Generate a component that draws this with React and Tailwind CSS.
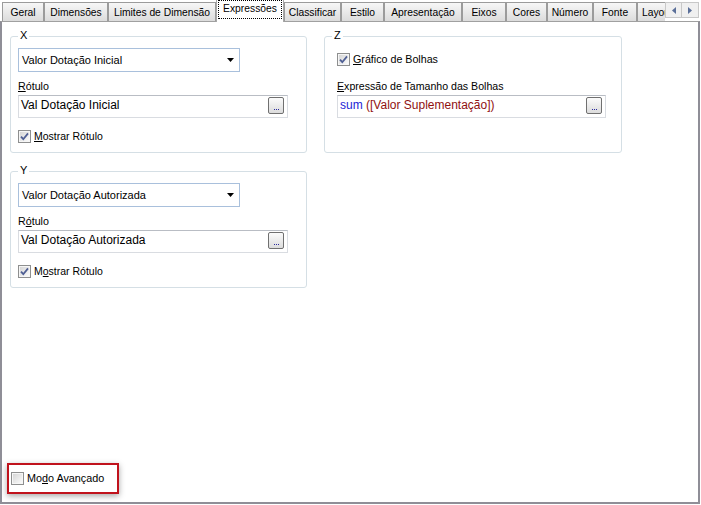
import React from "react";

function Check({ checked = false }) {
  return (
    <svg width="13" height="13" viewBox="0 0 13 13" className="shrink-0 block">
      <defs>
        <linearGradient id="cbg" x1="0" y1="0" x2="1" y2="1">
          <stop offset="0" stopColor="#d6d6d6" />
          <stop offset="1" stopColor="#fafafa" />
        </linearGradient>
      </defs>
      <rect x="0.5" y="0.5" width="12" height="12" fill="#f6f6f6" stroke="#8e8f8f" />
      <rect x="2" y="2" width="9" height="9" fill="url(#cbg)" />
      {checked && (
        <path d="M3 6.6 L5.3 9.2 L10 3.4" stroke="#4f5f94" strokeWidth="1.8" fill="none" />
      )}
    </svg>
  );
}

function Ellipsis() {
  return (
    <div className="mt-[1px] w-[16px] h-[17px] rounded-[2px] border border-[#707070] bg-gradient-to-b from-[#fbfbfb] to-[#dcdcdc] flex items-end justify-center pb-[3px] gap-[1px] shrink-0">
      <span className="w-[1px] h-[1px] bg-[#2b2b9e]" />
      <span className="w-[1px] h-[1px] bg-[#2b2b9e]" />
      <span className="w-[1px] h-[1px] bg-[#2b2b9e]" />
    </div>
  );
}

function Dropdown({ text }) {
  return (
    <div className="w-[222px] h-[24px] border border-[#a9c0dc] bg-white flex items-center justify-between pl-[3px] pr-[5px]">
      <span>{text}</span>
      <svg width="7" height="4" viewBox="0 0 7 4" className="block">
        <path d="M0 0 H7 L3.5 4 Z" fill="#000" />
      </svg>
    </div>
  );
}

function TextBox({ children, w }) {
  return (
    <div className={"mt-[2px] h-[23px] border border-[#d9dce1] border-t-[#b9bdc4] bg-white flex items-start justify-between pl-[2px] pr-[3px] " + w}>
      <span className="mt-[2px] text-[12px] leading-[15px]">{children}</span>
      <Ellipsis />
    </div>
  );
}

function Group({ legend, children, pad }) {
  return (
    <div className={"relative h-[117px] rounded-[3px] border border-[#d5dfe5] " + pad}>
      <span className="absolute -top-[8px] left-[7px] bg-white px-[2px] text-[11px] leading-[13px]">
        {legend}
      </span>
      {children}
    </div>
  );
}

function AxisGroup({ legend, drop, label, check }) {
  return (
    <Group legend={legend} pad="pl-[7px] pt-[11px]">
      <Dropdown text={drop} />
      <div className="mt-[8px] leading-[13px] text-[10.7px]">{label}</div>
      <TextBox w="w-[270px]">{check.value}</TextBox>
      <div className="mt-[12px] flex items-center gap-[3px]">
        <Check checked />
        <span className="text-[10.5px] leading-[13px]">{check.label}</span>
      </div>
    </Group>
  );
}

const tabs = [
  { t: "Geral", w: "w-[42px]" },
  { t: "Dimensões", w: "w-[64px]" },
  { t: "Limites de Dimensão", w: "w-[108px]" },
  { t: "Expressões", w: "w-[68px]", active: true },
  { t: "Classificar", w: "w-[57px]" },
  { t: "Estilo", w: "w-[43px]" },
  { t: "Apresentação", w: "w-[78px]" },
  { t: "Eixos", w: "w-[44px]" },
  { t: "Cores", w: "w-[41px]" },
  { t: "Número", w: "w-[46px]" },
  { t: "Fonte", w: "w-[44px]" },
];

function TabStrip() {
  return (
    <div className="h-[21px] flex items-end pl-[2px] text-[10.3px]">
      {tabs.map((tab) =>
        tab.active ? (
          <div
            key={tab.t}
            className={"relative z-10 -mb-[1px] h-[22px] bg-white border-x border-[#a8a8a8] flex flex-col " + tab.w}
          >
            <div className="mx-[1px] h-[19px] border border-dotted border-black flex items-center justify-center pb-[3px]">
              {tab.t}
            </div>
          </div>
        ) : (
          <div
            key={tab.t}
            className={"h-[19px] border border-b-0 border-[#9b9b9b] bg-gradient-to-b from-[#f7f7f7] to-[#dcdcdc] flex items-center justify-center whitespace-nowrap " + tab.w}
          >
            {tab.t}
          </div>
        )
      )}
      <div className="w-[28px] h-[19px] border border-b-0 border-r-0 border-[#9b9b9b] bg-gradient-to-b from-[#f7f7f7] to-[#dcdcdc] flex items-center pl-[4px] overflow-hidden whitespace-nowrap">
        Layout
      </div>
      <div className="self-start mt-[2px] flex">
        <div className="w-[17px] h-[16px] border border-[#c8c8c8] bg-[#f0f0f0] flex items-center justify-center">
          <svg width="4" height="7" viewBox="0 0 4 7" className="block">
            <path d="M4 0 V7 L0 3.5 Z" fill="#5a6f99" />
          </svg>
        </div>
        <div className="w-[17px] h-[16px] border border-l-0 border-[#c8c8c8] bg-[#f0f0f0] flex items-center justify-center">
          <svg width="4" height="7" viewBox="0 0 4 7" className="block">
            <path d="M0 0 V7 L4 3.5 Z" fill="#5a6f99" />
          </svg>
        </div>
      </div>
    </div>
  );
}

export default function App() {
  return (
    <div className="w-[701px] h-[505px] bg-white font-['Liberation_Sans',Arial,sans-serif] text-[11px] leading-[13px] text-black">
      <TabStrip />
      <div className="w-[700px] h-[483px] border-t border-t-[#a0a0a0] border-x-2 border-b-2 border-[#8f8e97] flex flex-col">
        <div className="pl-[8px] pt-[14px]">
          <div className="grid grid-cols-[297px_298px] gap-x-[17px] gap-y-[18px] items-start">
            <AxisGroup
              legend="X"
              drop="Valor Dotação Inicial"
              label={<><span className="underline">R</span>ótulo</>}
              check={{
                value: "Val Dotação Inicial",
                label: <><span className="underline">M</span>ostrar Rótulo</>,
              }}
            />
            <Group legend="Z" pad="pl-[12px] pt-[16px]">
              <div className="flex items-center gap-[3px]">
                <Check checked />
                <span className="text-[10.7px] leading-[13px]">
                  <span className="underline">G</span>ráfico de Bolhas
                </span>
              </div>
              <div className="mt-[14px] text-[10.6px] leading-[13px]">
                <span className="underline">E</span>xpressão de Tamanho das Bolhas
              </div>
              <TextBox w="w-[269px]">
                <span className="text-[#2323d6]">sum</span>{" "}
                <span className="text-[#8f1010]">([Valor Suplementação])</span>
              </TextBox>
            </Group>
            <AxisGroup
              legend="Y"
              drop="Valor Dotação Autorizada"
              label={<>R<span className="underline">ó</span>tulo</>}
              check={{
                value: "Val Dotação Autorizada",
                label: <>M<span className="underline">o</span>strar Rótulo</>,
              }}
            />
          </div>
        </div>
        <div className="mt-auto mb-[8px] ml-[5px] w-[112px] h-[31px] border-2 border-[#c0121c] shadow-[0_2px_6px_rgba(0,0,0,0.35)] flex items-center pl-[2px] gap-[3px]">
          <Check />
          <span className="text-[10.8px] leading-[13px]">
            Mo<span className="underline">d</span>o Avançado
          </span>
        </div>
      </div>
    </div>
  );
}
